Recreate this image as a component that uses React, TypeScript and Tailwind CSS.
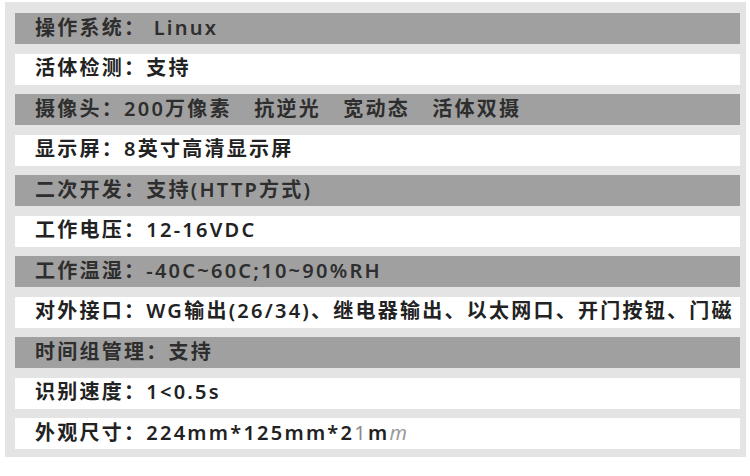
const rows: { text: React.ReactNode; dark: boolean }[] = [
  { text: "操作系统： Linux", dark: true },
  { text: "活体检测：支持", dark: false },
  { text: "摄像头：200万像素   抗逆光   宽动态   活体双摄", dark: true },
  { text: "显示屏：8英寸高清显示屏", dark: false },
  { text: "二次开发：支持(HTTP方式)", dark: true },
  { text: "工作电压：12-16VDC", dark: false },
  { text: "工作温湿：-40C~60C;10~90%RH", dark: true },
  { text: "对外接口：WG输出(26/34)、继电器输出、以太网口、开门按钮、门磁", dark: false },
  { text: "时间组管理：支持", dark: true },
  { text: "识别速度：1<0.5s", dark: false },
  {
    text: (
      <>
        外观尺寸：224mm*125mm*2<span className="font-normal text-[#8a8a8a]">1</span>m
        <span className="font-normal italic text-[#9a9a9a]">m</span>
      </>
    ),
    dark: false,
  },
];

export default function App() {
  return (
    <div className="w-[750px] h-[476px] bg-white pt-[2px] pl-[5px]">
      <div className="w-[741px] h-[455px] bg-[#e4e4e4] pt-[11px] pl-[10px] flex flex-col gap-[9.5px]">
        {rows.map((r, i) => (
          <div
            key={i}
            className={`w-[725px] h-[31px] flex items-center pl-[20px] whitespace-pre text-[20px] font-semibold tracking-[2.25px] leading-none ${
              r.dark ? "bg-[#a0a0a0] text-[#2e2e2e]" : "bg-white text-[#222]"
            }`}
            style={{ fontFamily: '"Noto Sans", "Noto Sans CJK SC", sans-serif' }}
          >
            <span className="-mt-[2px]">{r.text}</span>
          </div>
        ))}
      </div>
    </div>
  );
}
